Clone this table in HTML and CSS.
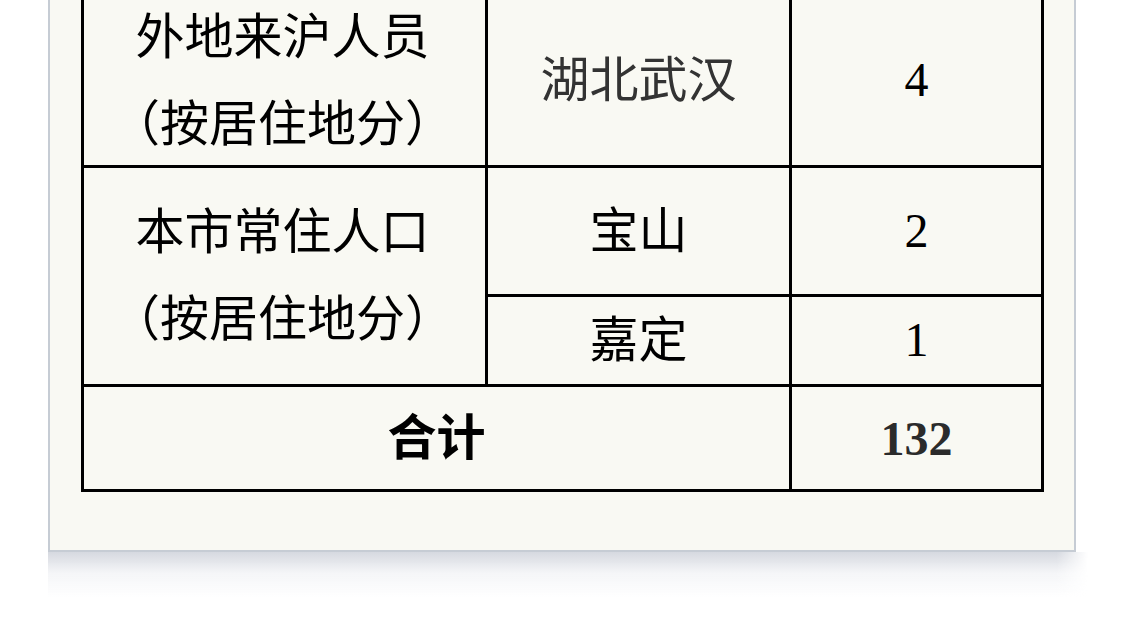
FILE: index.html
```html
<!DOCTYPE html>
<html lang="zh-CN">
<head>
<meta charset="utf-8">
<title>表格</title>
<link rel="stylesheet" href="styles.css">
</head>
<body>
<div class="page">
  <div class="card">
    <div class="table">
      <div class="cell c1 r1 label">外地来沪人员<br>（按居住地分）</div>
      <div class="cell c2 r1 place grey">湖北武汉</div>
      <div class="cell c3 r1 num">4</div>
      <div class="cell c1 r2 label">本市常住人口<br>（按居住地分）</div>
      <div class="cell c2 r2a place">宝山</div>
      <div class="cell c3 r2a num">2</div>
      <div class="cell c2 r2b place">嘉定</div>
      <div class="cell c3 r2b num">1</div>
      <div class="cell c12 r3 total">合计</div>
      <div class="cell c3 r3 num bold">132</div>
    </div>
  </div>
</div>
</body>
</html>
```

FILE: styles.css
```css
html {
  overflow: hidden;
}

html, body {
  margin: 0;
  padding: 0;
  background: #ffffff;
}

.page {
  padding-left: 48px;
  padding-bottom: 60px;
  width: 1028px;
}

.card {
  position: relative;
  margin-top: -9px;
  width: 963px;
  background: #f9f9f3;
  border: 2px solid #c6ccd4;
  padding: 0 30px 58px 31px;
}

.card::after {
  content: "";
  position: absolute;
  top: 100%;
  left: -2px;
  right: -14px;
  height: 46px;
  margin-top: 2px;
  background: linear-gradient(to bottom, rgba(196, 200, 210, 0.7), rgba(232, 234, 239, 0.45) 45%, rgba(255, 255, 255, 0));
  -webkit-mask-image: linear-gradient(to right, #000 97%, transparent);
  mask-image: linear-gradient(to right, #000 97%, transparent);
}

.table {
  display: grid;
  grid-template-columns: 401px 301px 249px;
  grid-template-rows: 169px 126px 87px 102px;
  gap: 3px;
  padding: 3px;
  background: #000000;
}

.cell {
  background: #f9f9f3;
  display: flex;
  align-items: center;
  justify-content: center;
  text-align: center;
  color: #000;
  font-family: "Noto Sans CJK SC", "Noto Sans", sans-serif;
  font-size: 49px;
  line-height: 87px;
  padding-bottom: 10px;
}

.c1 { grid-column: 1; }
.c2 { grid-column: 2; }
.c3 { grid-column: 3; }
.c12 { grid-column: 1 / 3; }

.r1 { grid-row: 1; }
.r2 { grid-row: 2 / 4; }
.r2a { grid-row: 2; }
.r2b { grid-row: 3; }
.r3 { grid-row: 4; }

.label {
  padding-right: 4px;
}

.grey {
  color: #333333;
}

.num {
  font-family: "Liberation Serif", "Times New Roman", serif;
  font-size: 48px;
  padding-bottom: 2px;
}

.bold {
  font-weight: 700;
  color: #2b2b2b;
  padding-bottom: 0;
}

.total {
  font-weight: 700;
}
```
